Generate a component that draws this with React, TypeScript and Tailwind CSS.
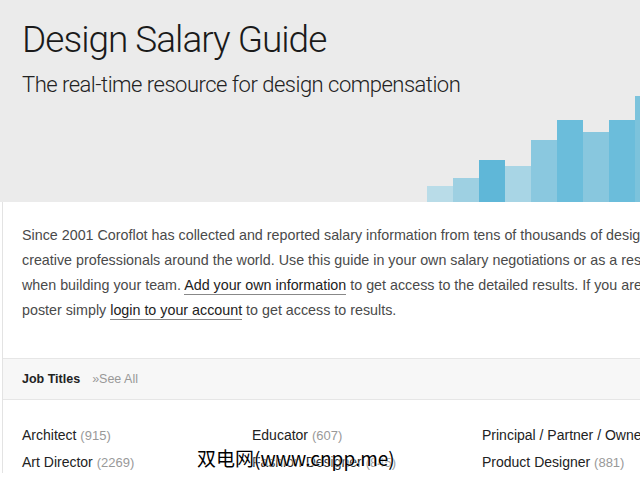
import React from "react";

const bars = [
  { h: 16, color: "#b9dce8" },
  { h: 24, color: "#9ed0e2" },
  { h: 42, color: "#5fb7d8" },
  { h: 36, color: "#a8d5e5" },
  { h: 62, color: "#8ac8df" },
  { h: 82, color: "#6bbddb" },
  { h: 70, color: "#88c7de" },
  { h: 82, color: "#6bbddb" },
  { h: 106, color: "#7cc3dc" },
];

const columns = [
  [
    { title: "Architect", count: 915 },
    { title: "Art Director", count: 2269 },
  ],
  [
    { title: "Educator", count: 607 },
    { title: "Fashion Designer", count: 845 },
  ],
  [
    { title: "Principal / Partner / Owner", count: 1422 },
    { title: "Product Designer", count: 881 },
  ],
];

function App() {
  return (
    <div className="relative w-[640px] h-[480px] overflow-hidden bg-white font-['Liberation_Sans',Arial,sans-serif]">
      {/* header */}
      <header className="flex h-[202px] bg-[#ebebeb]">
        <div className="flex-1 min-w-0 pl-[22px] pt-[17px] whitespace-nowrap font-['Roboto',sans-serif]">
          <h1 className="text-[37px] leading-[46px] font-light tracking-[-1px] text-[#1a1a1a]">
            Design Salary Guide
          </h1>
          <p className="mt-[9px] text-[22px] leading-[26px] font-light tracking-[-0.5px] text-[#222]">
            The real-time resource for design compensation
          </p>
        </div>
        <div className="flex items-end w-[213px] shrink-0">
          {bars.map((b, i) => (
            <div
              key={i}
              className="w-[26px] shrink-0"
              style={{ height: b.h, backgroundColor: b.color }}
            />
          ))}
        </div>
      </header>

      {/* body */}
      <section className="w-[760px] border-l border-[#e3e3e3] ml-[2px]">
        <p className="w-[720px] px-[19px] pt-[21px] pb-[35px] text-[14.3px] leading-[25px] text-[#4a4a4a]">
          Since 2001 Coroflot has collected and reported salary information from tens of thousands of designers and
          creative professionals around the world. Use this guide in your own salary negotiations or as a resource
          when building your team.{" "}
          <a className="text-[#222] border-b border-[#888] pb-[1px]">Add your own information</a> to get access to the
          detailed results. If you are a job poster simply{" "}
          <a className="text-[#222] border-b border-[#888] pb-[1px]">login to your account</a> to get access to
          results.
        </p>

        <div className="flex items-center gap-[12px] h-[42px] px-[19px] bg-[#f7f7f7] border-y border-[#e6e6e6]">
          <span className="text-[12.5px] font-bold text-[#222]">Job Titles</span>
          <span className="text-[12.5px] text-[#999]">»See All</span>
        </div>

        <div className="flex px-[19px] pt-[25px]">
          {columns.map((col, ci) => (
            <ul key={ci} className="w-[230px] shrink-0 flex flex-col gap-[6px]">
              {col.map((job) => (
                <li key={job.title} className="text-[14px] leading-[20px] text-[#222] whitespace-nowrap">
                  {job.title} <span className="text-[13px] text-[#999]">({job.count})</span>
                </li>
              ))}
            </ul>
          ))}
        </div>
      </section>

      {/* watermark */}
      <div className="absolute left-[197px] top-[445px] text-[19px] leading-[26px] text-black font-['Noto_Sans_CJK_SC',sans-serif] [text-shadow:0_0_2px_#fff,0_0_2px_#fff]">
        双电网(www.cnpp.me)
      </div>
    </div>
  );
}

export default App;
